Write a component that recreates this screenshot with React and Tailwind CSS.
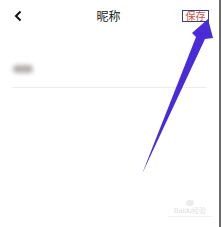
import React from "react";

export default function App() {
  return (
    <div className="relative w-[222px] h-[227px] bg-white overflow-hidden" style={{ fontFamily: '"Noto Sans CJK SC", "Noto Sans", sans-serif' }}>
      <div className="flex h-full">
        <div className="flex-1 flex flex-col">
          <div className="flex items-center justify-between h-[32px] pl-[14px] pr-[10px]">
            <svg width="9" height="12" viewBox="0 0 9 12" className="mt-[-1px]">
              <path d="M6.5 1.5 L2 6 L6.5 10.5" fill="none" stroke="#111" strokeWidth="2" />
            </svg>
            <span className="text-[12px] text-[#222] leading-none ml-[12px] mt-[-1px]">昵称</span>
            <span className="border border-[#3a3f6e] h-[12px] w-[27px] flex items-center justify-center text-[10px] leading-none whitespace-nowrap text-[#c8504a] mt-[-1px]">保存</span>
          </div>
          <div className="mx-[12px] mt-[33px] h-[23px] border-b border-[#ececec] flex items-start">
            <div className="w-[20px] h-[8px] ml-[1px] bg-[#b5b0b0] blur-[2px] rounded-sm" />
          </div>
        </div>
        <div className="w-[2px] bg-[#6a6a6a] mr-[1px]" />
      </div>

      <svg className="absolute left-0 top-0" width="222" height="227" viewBox="0 0 222 227">
        <polygon points="208,19 213,38 205,39 142,174 196,37 192,33" fill="#4a2bd8" />
      </svg>

      <div className="absolute left-[166px] top-[200px] w-[48px] flex flex-col items-center opacity-40">
        <div className="w-[8px] h-[6px] rounded-full bg-[#cfcfcf]" />
        <div className="text-[7px] leading-none text-[#aaa] mt-[1px] whitespace-nowrap" style={{ fontFamily: '"Liberation Sans", "Noto Sans CJK SC", sans-serif' }}>Baidu经验</div>
        <div className="w-[44px] h-px bg-[#ddd] mt-[2px]" />
      </div>
    </div>
  );
}
